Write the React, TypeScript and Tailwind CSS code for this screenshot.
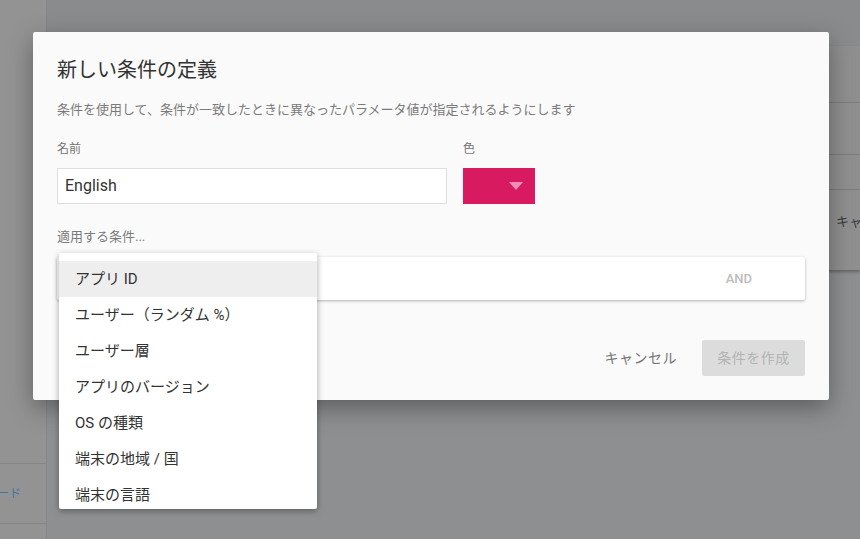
import React from "react";

const items = [
  "アプリ ID",
  "ユーザー（ランダム %）",
  "ユーザー層",
  "アプリのバージョン",
  "OS の種類",
  "端末の地域 / 国",
  "端末の言語",
];

export default function App() {
  return (
    <div
      className="relative w-[860px] h-[539px] overflow-hidden bg-[#8e8f91]"
      style={{ fontFamily: 'Roboto, "Noto Sans CJK JP", sans-serif' }}
    >
      {/* background page (dimmed) */}
      <div className="flex h-full">
        <div className="w-[47px] h-full bg-[#939393] border-r border-[#858585] flex flex-col overflow-hidden">
          <div className="h-[463px]" />
          <div className="h-[61px] border-t border-b border-[#858585] flex items-center justify-end pr-[25px] text-[12px] text-[#3d77a3] whitespace-nowrap">
            ード
          </div>
        </div>
        <div className="flex-1 flex flex-col">
          <div className="h-[46px] bg-[#8a8b8d]" />
          <div className="flex-1 flex justify-end">
            <div className="w-[32px] h-[224px] bg-[#8f8f8f] flex flex-col shadow-[0_2px_3px_rgba(0,0,0,0.3)] overflow-hidden">
              <div className="h-[57px] border-b border-[#7d7d7d]" />
              <div className="h-[52px] border-b border-[#7d7d7d]" />
              <div className="h-[35px] border-b border-[#7d7d7d]" />
              <div className="pl-[8px] pt-[22px] text-[13px] text-[#3a3a3a] whitespace-nowrap">キャ</div>
            </div>
          </div>
        </div>
      </div>

      {/* dialog */}
      <div className="absolute left-[33px] top-[32px] w-[796px] h-[368px] bg-[#fafafa] rounded-[2px] shadow-[0_8px_24px_rgba(0,0,0,0.35)] px-[24px] pt-[24px]">
        <div className="text-[20px] leading-[28px] text-[#333]">新しい条件の定義</div>
        <div className="mt-[17px] text-[13px] leading-[18px] text-[#7a7a7a]">
          条件を使用して、条件が一致したときに異なったパラメータ値が指定されるようにします
        </div>
        <div className="mt-[22px] flex gap-[16px]">
          <div className="flex flex-col">
            <div className="text-[12px] leading-[16px] text-[#757575]">名前</div>
            <div className="mt-[11px] w-[390px] h-[36px] bg-white border border-[#dedede] flex items-center px-[7px] text-[16px] text-[#333]">
              English
            </div>
          </div>
          <div className="flex flex-col">
            <div className="text-[12px] leading-[16px] text-[#757575]">色</div>
            <div className="mt-[11px] w-[72px] h-[36px] bg-[#d81b60] flex items-center justify-end pr-[12px]">
              <svg width="14" height="8" viewBox="0 0 14 8">
                <polygon points="0,0 14,0 7,8" fill="#f08fb3" />
              </svg>
            </div>
          </div>
        </div>
        <div className="mt-[24px] text-[13px] leading-[18px] text-[#7a7a7a]">適用する条件...</div>
        <div className="mt-[11px] w-[748px] h-[43px] bg-white rounded-[2px] shadow-[0_1px_3px_rgba(0,0,0,0.3)] flex items-center justify-end pr-[53px]">
          <span className="text-[13px] font-medium text-[#bdbdbd]">AND</span>
        </div>
        <div className="mt-[40px] flex justify-end items-center gap-[25px]">
          <span className="text-[14px] text-[#757575] tracking-[0.5px]">キャンセル</span>
          <div className="w-[103px] h-[36px] bg-[#dcdcdc] rounded-[2px] flex items-center justify-center text-[14px] text-[#b3b3b3] tracking-[0.5px]">
            条件を作成
          </div>
        </div>
      </div>

      {/* dropdown menu */}
      <div className="absolute left-[59px] top-[253px] w-[258px] h-[256px] overflow-hidden bg-white rounded-[2px] shadow-[0_2px_6px_rgba(0,0,0,0.35)] pt-[8px]">
        {items.map((t, i) => (
          <div
            key={t}
            className={
              "h-[36px] flex items-center pl-[16px] text-[15px] text-[#333] whitespace-nowrap " +
              (i === 0 ? "bg-[#eeeeee]" : "")
            }
          >
            {t}
          </div>
        ))}
      </div>
    </div>
  );
}
